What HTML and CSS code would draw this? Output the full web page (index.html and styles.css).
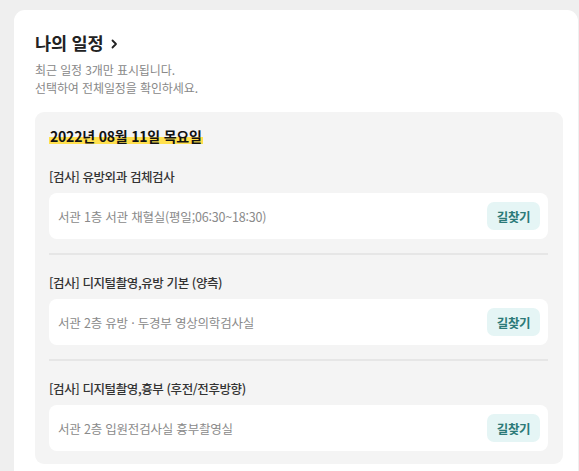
FILE: index.html
```html
<!DOCTYPE html>
<html lang="ko">
<head>
<meta charset="utf-8">
<link rel="stylesheet" href="styles.css">
</head>
<body>
<div class="card">
  <h1 class="title">나의 일정 <svg class="chev" width="7" height="10" viewBox="0 0 7 10"><polyline points="1.5,1.5 5,5 1.5,8.5" fill="none" stroke="#222" stroke-width="1.8" stroke-linecap="round" stroke-linejoin="round"/></svg></h1>
  <div class="desc">
    <p class="desc-line">최근 일정 3개만 표시됩니다.</p>
    <p class="desc-line">선택하여 전체일정을 확인하세요.</p>
  </div>
  <div class="box">
    <div class="date"><span class="hl">2022년 08월 11일 목요일</span></div>
    <div class="item">
      <div class="item-title">[검사] 유방외과 검체검사</div>
      <div class="row"><span class="loc">서관 1층 서관 채혈실(평일;06:30~18:30)</span><button class="btn">길찾기</button></div>
    </div>
    <div class="item">
      <div class="item-title">[검사] 디지털촬영,유방 기본 (양측)</div>
      <div class="row"><span class="loc">서관 2층 유방 · 두경부 영상의학검사실</span><button class="btn">길찾기</button></div>
    </div>
    <div class="item">
      <div class="item-title">[검사] 디지털촬영,흉부 (후전/전후방향)</div>
      <div class="row"><span class="loc">서관 2층 입원전검사실 흉부촬영실</span><button class="btn">길찾기</button></div>
    </div>
  </div>
</div>
</body>
</html>
```

FILE: styles.css
```css
html, body {
  margin: 0;
  padding: 0;
  background: #efefef;
  font-family: "Noto Sans CJK KR", "Noto Sans", sans-serif;
}
body {
  padding: 10px 1px 0 14px;
  height: 471px;
  box-sizing: border-box;
  overflow: hidden;
}
.card {
  background: #fff;
  border-radius: 11px 11px 0 0;
  padding: 21px 15px 20px 21px;
  min-height: 470px;
  box-sizing: border-box;
}
.title {
  margin: 0;
  font-size: 17.5px;
  font-weight: 700;
  line-height: 24px;
  color: #222;
  letter-spacing: -0.2px;
  display: flex;
  align-items: center;
  gap: 5px;
}
.chev { margin-left: 3px; margin-top: 1px; }
.desc {
  margin-top: 6px;
  display: flex;
  flex-direction: column;
  gap: 0;
}
.desc-line {
  margin: 0;
  font-size: 12px;
  line-height: 17.5px;
  color: #888;
  letter-spacing: -0.1px;
}
.box {
  margin-top: 16px;
  background: #f4f4f4;
  border-radius: 9px;
  padding: 14px 15px 13px 14px;
}
.date {
  font-size: 14px;
  font-weight: 700;
  line-height: 20px;
  color: #111;
  letter-spacing: -0.2px;
}
.hl {
  background: linear-gradient(transparent 55%, #ffe04d 55%, #ffe04d 90%, transparent 90%);
  padding: 0 1px;
}
.item {
  padding-top: 21px;
}
.item + .item {
  border-top: 2px solid #e6e6e6;
  margin-top: 14px;
  padding-top: 18px;
}
.item-title {
  font-size: 12.5px;
  font-weight: 500;
  line-height: 20px;
  color: #333;
  letter-spacing: -0.4px;
}
.row {
  margin-top: 6px;
  background: #fff;
  border-radius: 8px;
  height: 46px;
  box-sizing: border-box;
  padding: 0 8px 0 9px;
  display: flex;
  align-items: center;
  justify-content: space-between;
}
.loc {
  font-size: 12.5px;
  color: #8a8a8a;
  letter-spacing: -0.2px;
}
.btn {
  border: 0;
  background: #e5f5f5;
  color: #2c7a78;
  font-family: inherit;
  font-size: 12.5px;
  font-weight: 700;
  width: 53px;
  height: 28px;
  border-radius: 7px;
  padding: 0;
  letter-spacing: -0.3px;
}
```
